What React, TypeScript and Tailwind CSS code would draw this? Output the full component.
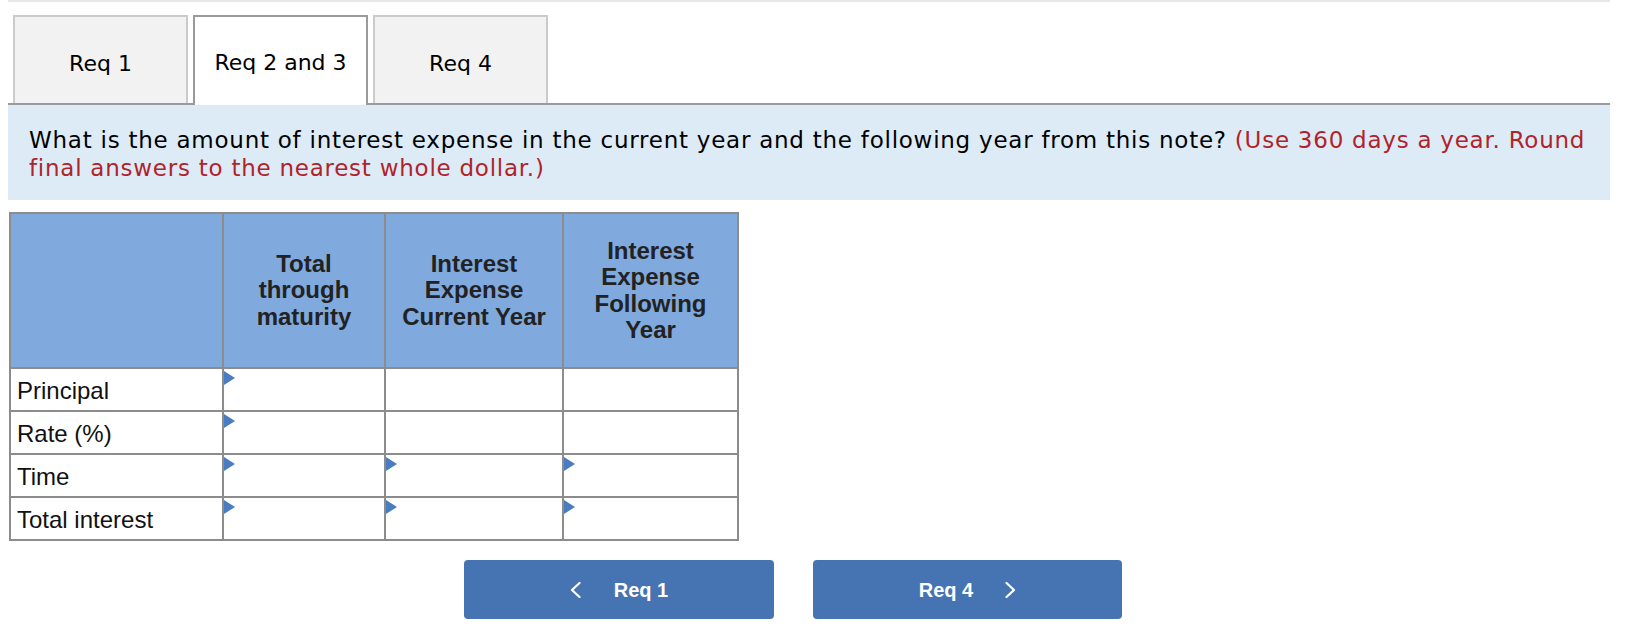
import { ReactNode } from 'react';

const Tri = () => (
  <span className="absolute left-0 top-[2px] w-0 h-0 border-y-[7px] border-y-transparent border-l-[11px] border-l-[#4a7cc0]" />
);

const Chevron = ({ dir }: { dir: 'left' | 'right' }) => (
  <svg width="11" height="16" viewBox="0 0 11 16" fill="none">
    <polyline
      points={dir === 'left' ? '9.5,1 2,8 9.5,15' : '1.5,1 9,8 1.5,15'}
      stroke="white"
      strokeWidth="2.2"
      strokeLinecap="round"
      strokeLinejoin="round"
    />
  </svg>
);

const Tab = ({ label, active }: { label: string; active?: boolean }) => (
  <div
    className={
      active
        ? 'relative z-10 -mb-[2px] flex h-[90px] w-[175px] items-center justify-center border-2 border-b-0 border-[#9a9a9a] bg-white pb-[2px] pt-[4px]'
        : 'flex h-[88px] w-[175px] items-center justify-center border-2 border-b-0 border-[#cbcbcb] bg-[#f2f2f2] pt-[6px]'
    }
  >
    {label}
  </div>
);

const HeadCell = ({ children }: { children?: ReactNode }) => (
  <div className="flex items-center justify-center border-b-2 border-r-2 border-[#8c8c8c] bg-[#80a9dd] px-[6px] text-center text-[24px] font-bold leading-[26.5px] text-[#222]">
    <div>{children}</div>
  </div>
);

const Cell = ({ tri }: { tri?: boolean }) => (
  <div className="relative border-b-2 border-r-2 border-[#8c8c8c] bg-white">{tri && <Tri />}</div>
);

const rows = [
  { label: 'Principal', tris: [true, false, false] },
  { label: 'Rate (%)', tris: [true, false, false] },
  { label: 'Time', tris: [true, true, true] },
  { label: 'Total interest', tris: [true, true, true] },
];

export default function App() {
  return (
    <div className="h-[628px] w-[1626px] overflow-hidden bg-white font-['DejaVu_Sans',Verdana,sans-serif] text-black">
      <div className="ml-[8px] w-[1602px] border-t-2 border-[#e8e8e8]" />

      {/* tabs */}
      <div className="mt-[13px] flex gap-[5px] pl-[13px] text-[22px]">
        <Tab label="Req 1" />
        <Tab label="Req 2 and 3" active />
        <Tab label="Req 4" />
      </div>

      {/* question */}
      <div className="ml-[8px] h-[97px] w-[1602px] border-t-2 border-[#9a9a9a] bg-[#ddebf7] pl-[21px] pr-[10px] pt-[21px] text-[23px] leading-[28px] tracking-[0.75px]">
        What is the amount of interest expense in the current year and the following year from this note?{' '}
        <span className="text-[#b0232a]">(Use 360 days a year. Round final answers to the nearest whole dollar.)</span>
      </div>

      {/* table */}
      <div className="ml-[9px] mt-[12px] grid w-[730px] grid-cols-[213px_162px_178px_175px] grid-rows-[155px_43px_43px_43px_43px] border-l-2 border-t-2 border-[#8c8c8c] font-['Liberation_Sans',Arial,sans-serif]">
        <HeadCell />
        <HeadCell>Total through maturity</HeadCell>
        <HeadCell>Interest Expense Current Year</HeadCell>
        <HeadCell>Interest Expense Following Year</HeadCell>
        {rows.map((row) => (
          <div key={row.label} className="contents">
            <div className="flex items-center border-b-2 border-r-2 border-[#8c8c8c] bg-white pl-[6px] pt-[2px] text-[24px] text-[#111]">
              {row.label}
            </div>
            {row.tris.map((t, i) => (
              <Cell key={i} tri={t} />
            ))}
          </div>
        ))}
      </div>

      {/* nav buttons */}
      <div className="ml-[464px] mt-[19px] flex gap-[39px] font-['Liberation_Sans',Arial,sans-serif] text-[20px] font-bold text-white">
        <button className="flex h-[59px] w-[310px] items-center justify-center gap-[33px] rounded-[4px] bg-[#4674b2]">
          <Chevron dir="left" />
          <span>Req 1</span>
        </button>
        <button className="flex h-[59px] w-[309px] items-center justify-center gap-[32px] rounded-[4px] bg-[#4674b2]">
          <span>Req 4</span>
          <Chevron dir="right" />
        </button>
      </div>
    </div>
  );
}
